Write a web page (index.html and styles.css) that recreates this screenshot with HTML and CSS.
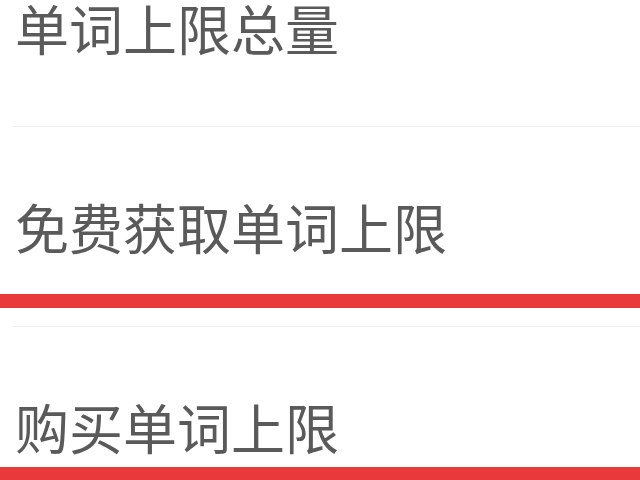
FILE: index.html
```html
<!DOCTYPE html>
<html lang="zh-CN">
<head>
<meta charset="utf-8">
<link rel="stylesheet" href="styles.css">
</head>
<body>
<ul class="menu">
  <li class="row row-first"><span class="label">单词上限总量</span></li>
  <li class="row"><span class="label">免费获取单词上限</span><span class="mark mark-1"></span></li>
  <li class="row"><span class="label">购买单词上限</span><span class="mark mark-2"></span></li>
</ul>
</body>
</html>
```
FILE: styles.css
```css
html, body {
  margin: 0;
  padding: 0;
  background: #ffffff;
  overflow: hidden;
}
.menu {
  list-style: none;
  margin: 0;
  padding: 0 0 0 13px;
}
.row {
  position: relative;
  height: 200px;
  display: flex;
  align-items: center;
  border-bottom: 1px solid #ececec;
  box-sizing: border-box;
}
.row-first {
  height: 127px;
  align-items: flex-start;
  padding-top: 1px;
}
.label {
  font-family: "Noto Sans CJK SC", "Noto Sans", sans-serif;
  font-size: 54px;
  color: #5a5a5a;
  padding-left: 2px;
  line-height: 1;
}
.mark {
  position: absolute;
  left: -13px;
  right: 0;
  height: 14px;
  background: #e83a3a;
}
.mark-1 { top: 167px; }
.mark-2 { top: 140px; height: 20px; }
```
